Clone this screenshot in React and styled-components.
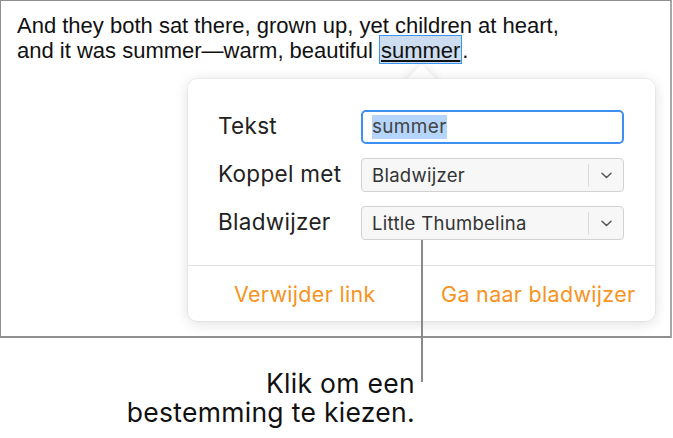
import React from 'react'
import styled, { createGlobalStyle } from 'styled-components';

const GlobalStyle = createGlobalStyle`
body {
    margin: 0;
    background: #ffffff;
}
`;

function Chevron() {
    return (
        <svg width="11" height="7" viewBox="0 0 11 7">
            <path d="M1 1.2 L5.5 5.5 L10 1.2" fill="none" stroke="#555" strokeWidth="1.5" strokeLinecap="round" strokeLinejoin="round"/>
        </svg>
    )
}

function Select({ value }) {
    return (
        <SelectBox>
            <SelectValue>{value}</SelectValue>
            <SelectDivider/>
            <ChevronWrap><Chevron/></ChevronWrap>
        </SelectBox>
    )
}

function App() {
    return (
        <Page>
            <GlobalStyle/>
            <Frame>
                <Paragraph>
                    And they both sat there, grown up, yet children at heart,
                    <br/>
                    and it was summer—warm, beautiful <Selected>summer</Selected>.
                </Paragraph>
                <Popover>
                    <Arrow/>
                    <PopoverBody>
                        <Form>
                            <Label>Tekst</Label>
                            <TextField><Highlight>summer</Highlight></TextField>
                            <Label>Koppel met</Label>
                            <Select value="Bladwijzer"/>
                            <Label>Bladwijzer</Label>
                            <Select value="Little Thumbelina"/>
                        </Form>
                        <Footer>
                            <FooterButton>Verwijder link</FooterButton>
                            <FooterButton>Ga naar bladwijzer</FooterButton>
                        </Footer>
                    </PopoverBody>
                </Popover>
            </Frame>
            <LeaderLine/>
            <Callout>
                <CalloutLine>Klik om een</CalloutLine>
                <CalloutLine>bestemming te kiezen.</CalloutLine>
            </Callout>
        </Page>
    )
}

export default App



const Page = styled.div`
position: relative;
width: 673px;
height: 438px;
overflow: hidden;
`;

const Frame = styled.div`
position: relative;
box-sizing: border-box;
width: 672px;
height: 338px;
border: 1px solid #8f8f8f;
border-right: 2px solid #a8a8a8;
border-bottom: 2px solid #8f8f8f;
`;

const Paragraph = styled.p`
margin: 0;
padding: 12px 16px;
font-family: "Liberation Sans", Arial, sans-serif;
font-size: 22px;
line-height: 25px;
color: #111;
`;

const Selected = styled.span`
background: #cddcee;
border: 1px solid #3796f4;
padding: 2px 1px 0;
text-decoration: underline;
text-decoration-thickness: 1.5px;
text-underline-offset: 2px;
`;

const Popover = styled.div`
position: absolute;
left: 187px;
top: 78px;
width: 467px;
height: 242px;
font-family: Inter, "Open Sans", sans-serif;
`;

const Arrow = styled.div`
position: absolute;
left: 222px;
top: -10px;
width: 23px;
height: 23px;
background: #fff;
transform: rotate(45deg);
box-shadow: 0 0 10px rgba(0, 0, 0, 0.12);
`;

const PopoverBody = styled.div`
position: relative;
height: 100%;
display: flex;
flex-direction: column;
background: #fff;
border-radius: 9px;
box-shadow: 0 2px 14px rgba(0, 0, 0, 0.14), 0 0 0 1px rgba(0, 0, 0, 0.035);
`;

const Form = styled.div`
display: grid;
grid-template-columns: 143px 1fr;
row-gap: 14px;
align-items: center;
padding: 31px 31px 25px 30px;
`;

const Label = styled.div`
padding-bottom: 3px;
font-size: 22.5px;
color: #222;
letter-spacing: 0.3px;
`;

const TextField = styled.div`
box-sizing: border-box;
height: 34px;
display: flex;
align-items: center;
padding: 0 9px;
border: 2px solid #3d8ff0;
border-radius: 5px;
`;

const Highlight = styled.span`
background: #b5d5fd;
font-size: 19px;
line-height: 24px;
color: #444;
letter-spacing: 0.3px;
`;

const SelectBox = styled.div`
box-sizing: border-box;
height: 34px;
display: flex;
align-items: center;
background: #f7f7f7;
border: 1px solid #d2d2d2;
border-radius: 4px;
`;

const SelectValue = styled.div`
flex: 1;
padding-left: 10px;
font-size: 18.5px;
color: #333;
letter-spacing: 0.3px;
`;

const SelectDivider = styled.div`
width: 1px;
height: 22px;
background: #dadada;
`;

const ChevronWrap = styled.div`
width: 34px;
display: flex;
justify-content: center;
`;

const Footer = styled.div`
flex: 1;
display: grid;
grid-template-columns: 1fr 1fr;
align-items: center;
border-top: 1px solid #e2e2e2;
`;

const FooterButton = styled.div`
text-align: center;
font-size: 21.5px;
color: #f7931e;
letter-spacing: 0.3px;
cursor: pointer;
`;

const LeaderLine = styled.div`
position: absolute;
left: 421px;
top: 240px;
width: 2px;
height: 142px;
background: #8a8a8a;
`;

const Callout = styled.div`
width: 415px;
margin-top: 29px;
display: flex;
flex-direction: column;
align-items: flex-end;
gap: 0;
font-family: Inter, "Open Sans", sans-serif;
font-size: 26.5px;
letter-spacing: 0.3px;
color: #111;
`;

const CalloutLine = styled.div`
height: 29px;
line-height: 32px;
`;
